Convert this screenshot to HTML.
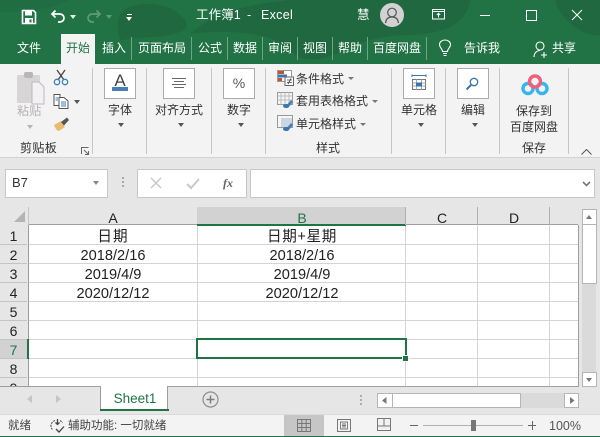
<!DOCTYPE html>
<html><head><meta charset="utf-8">
<style>
html,body{margin:0;padding:0;width:600px;height:437px;overflow:hidden;background:#e6e6e6}
body{position:relative;font-family:"Liberation Sans","Noto Sans CJK SC",sans-serif;font-size:12px;color:#333}
div,span,svg{position:absolute}
.t{white-space:nowrap;line-height:16px;height:16px}
.c{transform:translateX(-50%)}
.w{color:#fff}
.sep{width:1px;background:#c6c6c6;top:68px;height:86px}
.tsep{width:1px;background:#6fa488;top:37px;height:23px}
.box{width:30px;height:29px;background:#fff;border:1px solid #ababab;top:68px}
.cell{font-size:14.6px;line-height:19px;height:19px;white-space:nowrap;color:#222;transform:translateX(-50%)}
.h{font-size:14px;line-height:18px;white-space:nowrap;color:#222;transform:translateX(-50%)}
.rn{left:0;width:27px;text-align:center;font-size:14px;line-height:20px;height:19px;color:#222;background:#e6e6e6;border-bottom:1px solid #c4c4c4;box-sizing:border-box;overflow:hidden}
.hl{height:1px;left:29px;width:549px;background:#d4d4d4}
.vl{width:1px;top:225px;height:161px;background:#d4d4d4}
.arr{width:0;height:0;border-left:3.5px solid transparent;border-right:3.5px solid transparent;border-top:4px solid #777}
</style></head><body>
<!-- Title/tab -->
<div style="left:0;top:0;width:600px;height:64px;background:#217346;overflow:hidden">
<svg width="600" height="64" style="left:0;top:0"><g fill="#1f6840"><path d="M124 10C140 0 170 2 183 18C195 30 175 36 150 37L120 40C118 30 115 18 124 10Z"/><path d="M190 34C210 15 240 5 290 0H470C468 20 450 34 410 35C380 35 360 42 340 52C320 62 300 62 290 50C270 30 220 30 190 34Z"/><path d="M555 0H600V35C585 38 560 20 555 0Z"/><path d="M0 0H70C55 8 30 12 0 12Z" opacity=".5"/></g></svg>
</div>
<!-- save -->
<svg width="16" height="16" style="left:21px;top:9px" viewBox="0 0 16 16"><path d="M1.5 1.5H12.5L14.5 3.5V14.5H1.5Z" fill="none" stroke="#fff" stroke-width="1.6"/><rect x="4" y="2" width="7" height="4.5" fill="#fff"/><rect x="4" y="9" width="8" height="5.5" fill="#fff"/><rect x="8.5" y="10.5" width="2" height="3" fill="#217346"/></svg>
<!-- undo -->
<svg width="16" height="15" style="left:50px;top:9px" viewBox="0 0 16 15"><path d="M5.5 1.5L2 5L5.5 8.5M2 5H9.5C12.5 5 14 7 14 9S12.5 13 9.5 13H8" fill="none" stroke="#fff" stroke-width="1.7"/></svg>
<div class="arr" style="left:70px;top:15px;border-top-color:#e8f0ea"></div>
<svg width="16" height="15" style="left:86px;top:9px" viewBox="0 0 16 15"><path d="M10.5 1.5L14 5L10.5 8.5M14 5H6.5C3.5 5 2 7 2 9S3.5 13 6.5 13H8" fill="none" stroke="#5f9a7b" stroke-width="1.7"/></svg>
<div class="arr" style="left:106px;top:15px;border-top-color:#5f9a7b"></div>
<div style="left:127px;top:14px;width:5px;height:1px;background:#fff"></div>
<div class="arr" style="left:126px;top:17px;border-top-color:#fff"></div>
<div class="t w" style="left:196px;top:7px;font-size:12.5px;letter-spacing:.1px">工作簿1</div>
<div class="t w" style="left:247px;top:7px;font-size:12.5px">-</div>
<div class="t w" style="left:261px;top:7px;font-size:12.5px;letter-spacing:.3px">Excel</div>
<div class="t w" style="left:357px;top:7px;font-size:12.5px">慧</div>
<div style="left:380px;top:3px;width:24px;height:24px;border-radius:50%;background:#d2d2d2"></div>
<svg width="24" height="24" style="left:380px;top:3px" viewBox="0 0 24 24"><circle cx="12" cy="9.5" r="4.3" fill="none" stroke="#555" stroke-width="1.2"/><path d="M5.5 20C6 15.5 9 14 12 14S18 15.5 18.5 20" fill="none" stroke="#555" stroke-width="1.2"/></svg>
<svg width="14" height="12" style="left:432px;top:9px" viewBox="0 0 14 12"><rect x=".5" y=".5" width="12" height="9.5" fill="none" stroke="#fff"/><path d="M.5 2.5H12.5" stroke="#fff"/><path d="M6.5 8.5V4.5M4.8 6L6.5 4.2L8.2 6" fill="none" stroke="#fff"/></svg>
<div style="left:480px;top:15px;width:10px;height:1px;background:#fff"></div>
<div style="left:526px;top:10px;width:9px;height:9px;border:1px solid #fff"></div>
<svg width="12" height="12" style="left:571px;top:9px"><path d="M1 1L11 11M11 1L1 11" stroke="#fff" stroke-width="1"/></svg>
<!-- tabs -->
<div class="t w" style="left:17px;top:40px">文件</div>
<div style="left:61px;top:34px;width:34px;height:30px;background:#f3f3f3"></div>
<div class="t" style="left:66px;top:40px;color:#217346">开始</div>
<div class="t w" style="left:102px;top:40px">插入</div>
<div class="tsep" style="left:131px"></div>
<div class="t w" style="left:138px;top:40px">页面布局</div>
<div class="tsep" style="left:191px"></div>
<div class="t w" style="left:198px;top:40px">公式</div>
<div class="tsep" style="left:227px"></div>
<div class="t w" style="left:233px;top:40px">数据</div>
<div class="tsep" style="left:262px"></div>
<div class="t w" style="left:268px;top:40px">审阅</div>
<div class="tsep" style="left:297px"></div>
<div class="t w" style="left:303px;top:40px">视图</div>
<div class="tsep" style="left:332px"></div>
<div class="t w" style="left:338px;top:40px">帮助</div>
<div class="tsep" style="left:367px"></div>
<div class="t w" style="left:373px;top:40px">百度网盘</div>
<div class="tsep" style="left:426px"></div>
<svg width="14" height="18" style="left:438px;top:39px" viewBox="0 0 14 18"><path d="M4.5 12.5C4.5 9.5 1.5 9 1.5 5.5C1.5 3 4 1 7 1S12.5 3 12.5 5.5C12.5 9 9.5 9.5 9.5 12.5Z M5 14.5H9M5.5 16.5H8.5" fill="none" stroke="#fff" stroke-width="1.1"/></svg>
<div class="t w" style="left:464px;top:40px">告诉我</div>
<svg width="16" height="18" style="left:533px;top:41px" viewBox="0 0 16 18"><circle cx="7" cy="5" r="4" fill="none" stroke="#fff" stroke-width="1.1"/><path d="M1 16C1 12 4 9.5 7 9.5M11 11V17M8 14H14" fill="none" stroke="#fff" stroke-width="1.1"/></svg>
<div class="t w" style="left:552px;top:40px">共享</div>
<!-- ribbon -->
<div style="left:0;top:64px;width:600px;height:94px;background:#f3f3f3;border-bottom:1px solid #d2d2d2;box-sizing:border-box"></div>
<div class="sep" style="left:92px"></div><div class="sep" style="left:146px"></div><div class="sep" style="left:211px"></div><div class="sep" style="left:265px"></div><div class="sep" style="left:391px"></div><div class="sep" style="left:445px"></div><div class="sep" style="left:499px"></div><div class="sep" style="left:568px"></div>
<!-- clipboard -->
<svg width="30" height="38" style="left:16px;top:71px" viewBox="0 0 30 38"><rect x="1" y="4" width="23" height="28" rx="1" fill="#d8d5d7"/><rect x="8" y="1" width="9" height="6" rx="2" fill="#b9b6b8"/><path d="M16 11H23L28 16V33H16Z" fill="#f4f1f4" stroke="#bcb9bc"/></svg>
<div class="t" style="left:17px;top:103px;color:#b2b2b2;letter-spacing:.3px">粘贴</div>
<div class="arr" style="left:27px;top:125px;border-top-color:#b5b5b5"></div>
<svg width="16" height="17" style="left:53px;top:69px" viewBox="0 0 16 17"><path d="M4 1L11 11M12 1L5 11" stroke="#444" stroke-width="1.3"/><circle cx="4" cy="13" r="2.7" fill="none" stroke="#3d7fb8" stroke-width="1.3"/><circle cx="12" cy="13" r="2.7" fill="none" stroke="#3d7fb8" stroke-width="1.3"/></svg>
<svg width="16" height="15" style="left:53px;top:94px" viewBox="0 0 16 15"><path d="M1 .5H7V11.5H1Z" fill="#fff" stroke="#555"/><path d="M6 3.5H11L15 7V14.5H6Z" fill="#fff" stroke="#555"/><path d="M8 8H13M8 10H13M8 12H13M2.5 4H5M2.5 6H5" stroke="#3d7fb8"/></svg>
<div class="arr" style="left:74px;top:100px;border-top-color:#555"></div>
<svg width="17" height="16" style="left:53px;top:116px" viewBox="0 0 17 16"><path d="M1 9L8 5L12 11L6 15C4 15 2 12 1 9Z" fill="#eabb6e"/><path d="M8 6L14 1.5L16 4L11 9.5Z" fill="#555"/></svg>
<div class="t" style="left:20px;top:140px;letter-spacing:.4px">剪贴板</div>
<svg width="8" height="8" style="left:81px;top:147px"><path d="M.5 7V.5H7.5M3 3L7.5 7.5M7.5 4V7.5H4" fill="none" stroke="#666"/></svg>
<!-- font -->
<div class="box" style="left:104px"></div>
<div class="t c" style="left:120px;top:72px;font-size:17px;color:#444;line-height:18px;height:18px">A</div>
<div style="left:112px;top:87px;width:16px;height:4px;background:#4a7eb3"></div>
<div class="t c" style="left:120px;top:102px;color:#333">字体</div>
<div class="arr c" style="left:121px;top:123px;border-top-color:#555"></div>
<!-- align -->
<div class="box" style="left:163px"></div>
<svg width="14" height="10" style="left:172px;top:78px"><path d="M0 .5H14M2 3.5H12M0 6.5H14M2 9.5H12" stroke="#666"/></svg>
<div class="t c" style="left:179px;top:102px">对齐方式</div>
<div class="arr c" style="left:181px;top:123px;border-top-color:#555"></div>
<!-- number -->
<div class="box" style="left:223px"></div>
<div class="t c" style="left:239px;top:75px;font-size:14px;color:#555">%</div>
<div class="t c" style="left:239px;top:102px">数字</div>
<div class="arr c" style="left:241px;top:123px;border-top-color:#555"></div>
<!-- styles -->
<svg width="17" height="16" style="left:277px;top:70px" viewBox="0 0 17 16"><rect x=".5" y=".5" width="14" height="11" fill="#fff" stroke="#999"/><rect x="1" y="1" width="6" height="3" fill="#c0562f"/><rect x="1" y="4.5" width="9" height="3" fill="#3a76ae"/><rect x="1" y="8" width="4" height="3" fill="#c0562f"/><rect x="8" y="7" width="8.5" height="8.5" fill="#fff" stroke="#666"/><path d="M10 10H15M10 12.5H15M11 14L14 8.5" stroke="#444" stroke-width=".8"/></svg>
<div class="t" style="left:296px;top:71px">条件格式</div>
<div class="arr" style="left:348px;top:77px;border-left-width:3px;border-right-width:3px;border-top-width:3px"></div>
<svg width="17" height="17" style="left:277px;top:92px" viewBox="0 0 17 17"><rect x=".5" y=".5" width="15" height="12" fill="#f5f5f5" stroke="#999"/><path d="M.5 4H15.5M.5 8H15.5M4 .5V12.5M8 .5V12.5M12 .5V12.5" stroke="#bbb"/><path d="M8 15L14 8L16 10L11 16Z" fill="#4a7eb3"/><ellipse cx="9" cy="14" rx="3" ry="2" fill="#3a76ae"/></svg>
<div class="t" style="left:296px;top:93px">套用表格格式</div>
<div class="arr" style="left:372px;top:100px;border-left-width:3px;border-right-width:3px;border-top-width:3px"></div>
<svg width="17" height="17" style="left:277px;top:115px" viewBox="0 0 17 17"><rect x=".5" y=".5" width="15" height="12" fill="#f5f5f5" stroke="#999"/><rect x="4" y="3" width="11" height="9" fill="#c9d6e3"/><path d="M8 15L14 8L16 10L11 16Z" fill="#4a7eb3"/><ellipse cx="9" cy="14" rx="3" ry="2" fill="#3a76ae"/></svg>
<div class="t" style="left:296px;top:116px">单元格样式</div>
<div class="arr" style="left:360px;top:123px;border-left-width:3px;border-right-width:3px;border-top-width:3px"></div>
<div class="t c" style="left:328px;top:140px">样式</div>
<!-- cells -->
<div class="box" style="left:403px"></div>
<svg width="16" height="17" style="left:411px;top:74px" viewBox="0 0 16 17"><path d="M1 1.5H15M1 .5V3M15 .5V3" stroke="#3a76ae"/><rect x="1.5" y="5.5" width="13" height="10" fill="#fff" stroke="#777"/><path d="M1.5 9H14.5M1.5 12H14.5M5.5 5.5V15.5M10.5 5.5V15.5" stroke="#aaa"/><rect x="5" y="8.5" width="6" height="4" fill="#3a76ae"/></svg>
<div class="t c" style="left:419px;top:102px">单元格</div>
<div class="arr c" style="left:421px;top:123px;border-top-color:#555"></div>
<!-- edit -->
<div class="box" style="left:457px"></div>
<svg width="14" height="14" style="left:465px;top:77px" viewBox="0 0 14 14"><circle cx="9" cy="5" r="3.7" fill="none" stroke="#3a76ae" stroke-width="1.3"/><path d="M6 8L1.5 12.5" stroke="#3a76ae" stroke-width="2"/></svg>
<div class="t c" style="left:473px;top:102px">编辑</div>
<div class="arr c" style="left:475px;top:123px;border-top-color:#555"></div>
<!-- baidu -->
<svg width="28" height="22" style="left:521px;top:74px" viewBox="0 0 28 22"><circle cx="7" cy="14.5" r="5" fill="none" stroke="#38b4ee" stroke-width="3.4"/><circle cx="21" cy="14.5" r="5" fill="none" stroke="#38b4ee" stroke-width="3.4"/><circle cx="14" cy="7.5" r="5.5" fill="none" stroke="#f0607a" stroke-width="3.4"/></svg>
<div class="t c" style="left:534px;top:103px">保存到</div>
<div class="t c" style="left:534px;top:119px">百度网盘</div>
<div class="t c" style="left:534px;top:140px">保存</div>
<svg width="11" height="6" style="left:581px;top:149px"><path d="M.5 5.5L5.5 .5L10.5 5.5" fill="none" stroke="#555"/></svg>
<!-- formula bar -->
<div style="left:5px;top:169px;width:101px;height:27px;background:#fff;border:1px solid #c8c8c8"></div>
<div class="t" style="left:12px;top:175px;font-size:13px">B7</div>
<div class="arr" style="left:93px;top:181px;border-top-color:#888"></div>
<div style="left:122px;top:177px;width:2px;height:2px;background:#aaa;box-shadow:0 4px 0 #aaa,0 8px 0 #aaa"></div>
<div style="left:137px;top:169px;width:108px;height:27px;background:#fff;border:1px solid #c8c8c8"></div>
<svg width="12" height="12" style="left:150px;top:177px"><path d="M1 1L11 11M11 1L1 11" stroke="#c8c8c8" stroke-width="1.5"/></svg>
<svg width="14" height="12" style="left:186px;top:178px"><path d="M1 6L5 10L13 1" fill="none" stroke="#c8c8c8" stroke-width="2"/></svg>
<div class="t" style="left:223px;top:175px;font-family:'Liberation Serif',serif;font-style:italic;font-weight:bold;font-size:12px;color:#666">fx</div>
<div style="left:250px;top:169px;width:343px;height:27px;background:#fff;border:1px solid #c8c8c8"></div>
<svg width="9" height="6" style="left:582px;top:181px"><path d="M1 1L4.5 4.5L8 1" fill="none" stroke="#777" stroke-width="1.6"/></svg>
<!-- grid -->
<div style="left:28px;top:225px;width:550px;height:161px;background:#fff"></div>
<div class="hl" style="top:244px"></div><div class="hl" style="top:263px"></div><div class="hl" style="top:282px"></div><div class="hl" style="top:301px"></div><div class="hl" style="top:320px"></div><div class="hl" style="top:339px"></div><div class="hl" style="top:358px"></div><div class="hl" style="top:377px"></div>
<div class="vl" style="left:197px"></div><div class="vl" style="left:405px"></div><div class="vl" style="left:477px"></div><div class="vl" style="left:549px"></div>
<!-- col hdr -->
<div style="left:0;top:207px;width:578px;height:18px;background:#e6e6e6"></div>
<div style="left:197px;top:207px;width:209px;height:17px;background:#d2d2d2"></div>
<div style="left:28px;top:224px;width:550px;height:1px;background:#9e9e9e"></div>
<div style="left:197px;top:224px;width:209px;height:2px;background:#217346"></div>
<div style="left:28px;top:207px;width:1px;height:18px;background:#c6c6c6"></div>
<div style="left:405px;top:207px;width:1px;height:18px;background:#b0b0b0"></div>
<div style="left:477px;top:207px;width:1px;height:18px;background:#b0b0b0"></div>
<div style="left:549px;top:207px;width:1px;height:18px;background:#b0b0b0"></div>
<svg width="12" height="12" style="left:14px;top:211px"><path d="M11 0V11H0Z" fill="#b4b4b4"/></svg>
<div class="h" style="left:113px;top:209px">A</div>
<div class="h" style="left:302px;top:209px;color:#217346">B</div>
<div class="h" style="left:442px;top:209px">C</div>
<div class="h" style="left:514px;top:209px">D</div>
<!-- row hdr -->
<div class="rn" style="top:226px">1</div><div class="rn" style="top:245px">2</div><div class="rn" style="top:264px">3</div><div class="rn" style="top:283px">4</div><div class="rn" style="top:302px">5</div><div class="rn" style="top:321px">6</div><div class="rn" style="top:340px;background:#d2d2d2;color:#217346">7</div><div class="rn" style="top:359px">8</div>
<div class="rn" style="top:378px;height:8px;border:0">9</div>
<div style="left:0;top:225px;width:28px;height:1px;background:#e6e6e6"></div>
<div style="left:28px;top:225px;width:1px;height:161px;background:#9e9e9e"></div>
<div style="left:27px;top:339px;width:2px;height:20px;background:#217346"></div>
<!-- cells -->
<div class="cell" style="left:113px;top:228px;letter-spacing:1px">日期</div>
<div class="cell" style="left:113px;top:247px">2018/2/16</div>
<div class="cell" style="left:113px;top:266px">2019/4/9</div>
<div class="cell" style="left:113px;top:285px">2020/12/12</div>
<div class="cell" style="left:302px;top:228px;letter-spacing:.6px">日期+星期</div>
<div class="cell" style="left:302px;top:247px">2018/2/16</div>
<div class="cell" style="left:302px;top:266px">2019/4/9</div>
<div class="cell" style="left:302px;top:285px">2020/12/12</div>
<!-- selection -->
<div style="left:196px;top:338px;width:207px;height:17px;border:2px solid #217346"></div>
<div style="left:402px;top:355px;width:7px;height:7px;background:#217346;border:1px solid #fff;box-sizing:border-box"></div>
<!-- grid bottom/right border -->
<div style="left:578px;top:225px;width:1px;height:162px;background:#9e9e9e"></div>
<div style="left:0;top:386px;width:579px;height:1px;background:#9e9e9e"></div>
<!-- v scroll -->
<div style="left:582px;top:209px;width:14px;height:177px;background:#dadada"></div>
<div style="left:582px;top:209px;width:13px;height:14px;background:#fff;border:1px solid #b5b5b5"></div>
<div style="left:582px;top:224px;width:13px;height:58px;background:#fff;border:1px solid #b5b5b5"></div>
<div style="left:582px;top:372px;width:13px;height:13px;background:#fff;border:1px solid #b5b5b5"></div>
<div class="arr" style="left:586px;top:215px;border-top:0;border-bottom:4px solid #777"></div>
<div class="arr" style="left:586px;top:378px"></div>
<!-- sheet bar -->
<div style="left:0;top:387px;width:600px;height:27px;background:#e6e6e6"></div>
<div style="left:100px;top:386px;width:68px;height:23px;background:#fff;border-left:1px solid #9e9e9e;border-right:1px solid #9e9e9e;box-sizing:border-box"></div>
<div style="left:100px;top:409px;width:69px;height:2px;background:#217346"></div>
<div class="t c" style="left:135px;top:391px;font-size:13.5px;color:#217346">Sheet1</div>
<svg width="6" height="8" style="left:27px;top:395px"><path d="M5 0V8L0 4Z" fill="#c4c4c4"/></svg>
<svg width="6" height="8" style="left:56px;top:395px"><path d="M0 0V8L5 4Z" fill="#c4c4c4"/></svg>
<svg width="17" height="17" style="left:202px;top:391px"><circle cx="8.5" cy="8.5" r="7.5" fill="none" stroke="#8c8c8c" stroke-width="1.2"/><path d="M4.5 8.5H12.5M8.5 4.5V12.5" stroke="#7c7c7c" stroke-width="1.5"/></svg>
<div style="left:360px;top:395px;width:2px;height:2px;background:#aaa;box-shadow:0 4px 0 #aaa,0 8px 0 #aaa"></div>
<div style="left:377px;top:393px;width:202px;height:15px;background:#dadada"></div>
<div style="left:377px;top:393px;width:14px;height:13px;background:#fff;border:1px solid #b5b5b5"></div>
<div style="left:392px;top:393px;width:127px;height:13px;background:#fff;border:1px solid #b5b5b5"></div>
<div style="left:564px;top:393px;width:13px;height:13px;background:#fff;border:1px solid #b5b5b5"></div>
<svg width="5" height="7" style="left:382px;top:397px"><path d="M4.5 0V7L0 3.5Z" fill="#777"/></svg>
<svg width="5" height="7" style="left:570px;top:397px"><path d="M0 0V7L4.5 3.5Z" fill="#777"/></svg>
<!-- status -->
<div style="left:0;top:414px;width:600px;height:23px;background:#f3f3f3;border-top:1px solid #dadada;box-sizing:border-box"></div>
<div style="left:0;top:436px;width:600px;height:1px;background:#217346"></div>
<div class="t" style="left:8px;top:418px;font-size:11.5px;color:#444">就绪</div>
<svg width="15" height="15" style="left:50px;top:418px" viewBox="0 0 15 15"><path d="M5 2.5C2.5 3.5 1 5.5 1 8C1 9.5 1.5 10.5 2.5 11.5M10 2.5C11 3 12 4 12.5 5" fill="none" stroke="#555" stroke-dasharray="2 1" stroke-width="1.1"/><path d="M7.5 1V6M5.5 4.5L7.5 6.5L9.5 4.5M6 11L9 14L14 8.5" fill="none" stroke="#444" stroke-width="1.3"/></svg>
<div class="t" style="left:68px;top:418px;font-size:11.5px;color:#444">辅助功能: 一切就绪</div>
<div style="left:284px;top:415px;width:40px;height:21px;background:#c6c6c6"></div>
<svg width="14" height="13" style="left:297px;top:419px"><path d="M.5 .5H13.5V12.5H.5ZM.5 4.5H13.5M.5 8.5H13.5M4.8 .5V12.5M9.2 .5V12.5" fill="none" stroke="#777"/></svg>
<svg width="14" height="13" style="left:337px;top:419px"><path d="M.5 .5H13.5V12.5H.5Z" fill="none" stroke="#777"/><path d="M3.5 3H10.5V10H3.5ZM5 5H9M5 6.5H9M5 8H9" fill="none" stroke="#777" stroke-width=".9"/></svg>
<svg width="14" height="13" style="left:377px;top:418px"><path d="M.5 .5H13.5V12.5H.5ZM.5 8H13.5M7 .5V8" fill="none" stroke="#777"/></svg>
<div style="left:410px;top:425px;width:8px;height:1px;background:#666"></div>
<div style="left:423px;top:425px;width:100px;height:1px;background:#b0b0b0"></div>
<div style="left:471px;top:420px;width:5px;height:11px;background:#777"></div>
<div style="left:528px;top:425px;width:8px;height:1px;background:#666"></div>
<div style="left:532px;top:421px;width:1px;height:9px;background:#666"></div>
<div class="t" style="left:549px;top:418px;font-size:12.5px;color:#555">100%</div>
</body></html>
